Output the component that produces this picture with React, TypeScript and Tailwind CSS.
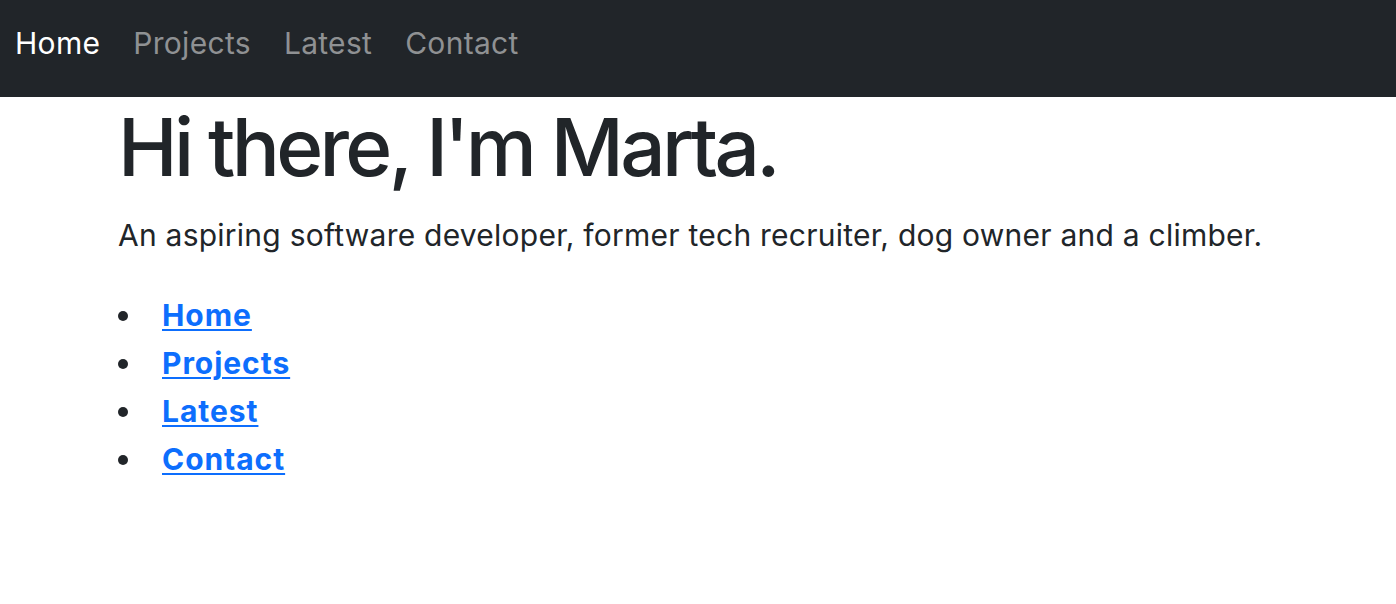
import React from "react";

export default function App() {
  const links = ["Home", "Projects", "Latest", "Contact"];
  return (
    <div className="min-h-[604px] bg-white font-['Inter',sans-serif] text-[#212529]">
      <nav className="flex h-[97px] items-center bg-[#212529] px-[15px] pb-[11px]">
        {links.map((l, i) => (
          <a
            key={l}
            href="#"
            className={`mr-[33px] text-[30px] leading-[45px] tracking-[0.3px] ${i === 0 ? "text-white" : "text-[#8f9193]"}`}
          >
            {l}
          </a>
        ))}
      </nav>
      <main className="pl-[118px] pt-[2px]">
        <h1 className="text-[80px] font-medium leading-[96px] tracking-[-3.65px]">Hi there, I'm Marta.</h1>
        <p className="mt-[18px] text-[30px] leading-[45px] tracking-[0.24px]">
          An aspiring software developer, former tech recruiter, dog owner and a climber.
        </p>
        <ul className="mt-[33px] flex flex-col">
          {links.map((l) => (
            <li key={l} className="flex items-center text-[30px] leading-[48px]">
              <span className="mr-[34px] mt-[2px] h-[10px] w-[10px] rounded-full bg-[#212529]" />
              <a href="#" className="font-bold tracking-[0.95px] text-[#0d6efd] underline decoration-[2px] underline-offset-[3px]">
                {l}
              </a>
            </li>
          ))}
        </ul>
      </main>
    </div>
  );
}
